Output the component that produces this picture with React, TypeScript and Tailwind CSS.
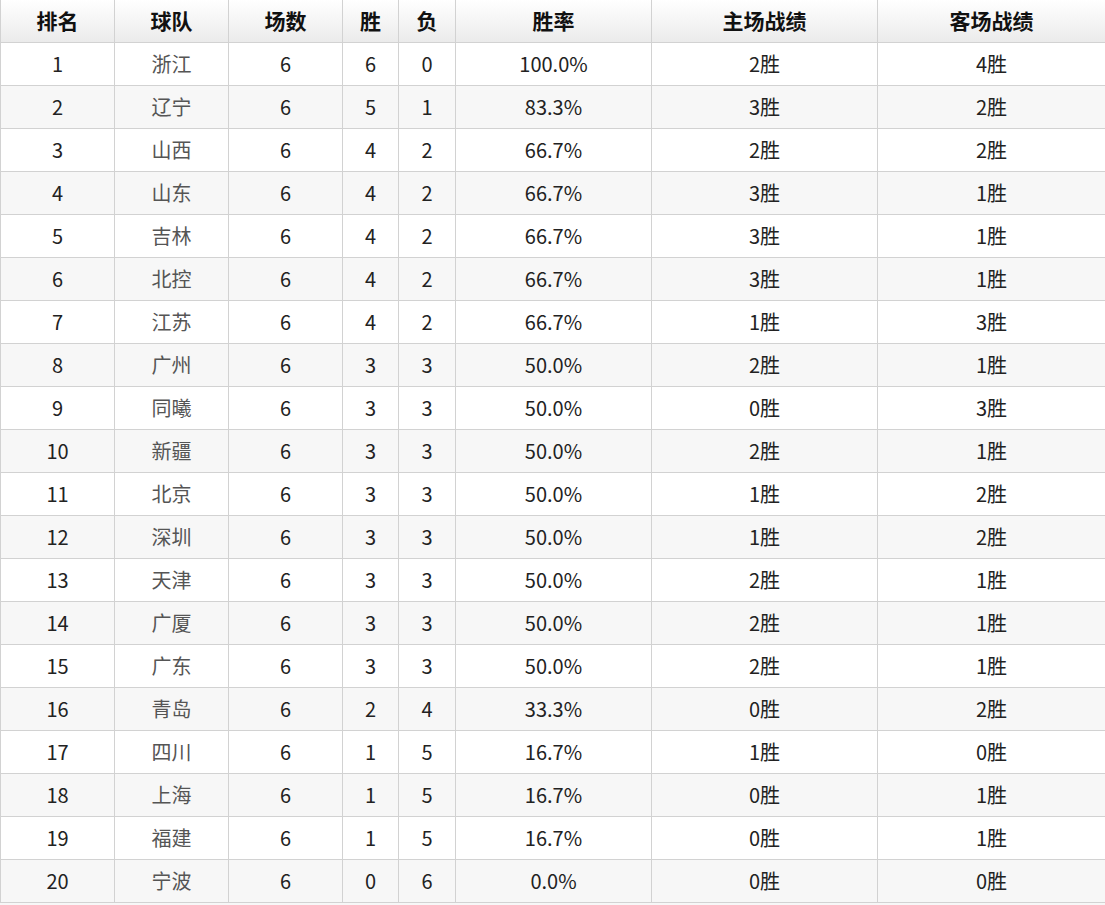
const rows: [number, string, number, number, number, string, string, string][] = [
  [1, '浙江', 6, 6, 0, '100.0%', '2胜', '4胜'],
  [2, '辽宁', 6, 5, 1, '83.3%', '3胜', '2胜'],
  [3, '山西', 6, 4, 2, '66.7%', '2胜', '2胜'],
  [4, '山东', 6, 4, 2, '66.7%', '3胜', '1胜'],
  [5, '吉林', 6, 4, 2, '66.7%', '3胜', '1胜'],
  [6, '北控', 6, 4, 2, '66.7%', '3胜', '1胜'],
  [7, '江苏', 6, 4, 2, '66.7%', '1胜', '3胜'],
  [8, '广州', 6, 3, 3, '50.0%', '2胜', '1胜'],
  [9, '同曦', 6, 3, 3, '50.0%', '0胜', '3胜'],
  [10, '新疆', 6, 3, 3, '50.0%', '2胜', '1胜'],
  [11, '北京', 6, 3, 3, '50.0%', '1胜', '2胜'],
  [12, '深圳', 6, 3, 3, '50.0%', '1胜', '2胜'],
  [13, '天津', 6, 3, 3, '50.0%', '2胜', '1胜'],
  [14, '广厦', 6, 3, 3, '50.0%', '2胜', '1胜'],
  [15, '广东', 6, 3, 3, '50.0%', '2胜', '1胜'],
  [16, '青岛', 6, 2, 4, '33.3%', '0胜', '2胜'],
  [17, '四川', 6, 1, 5, '16.7%', '1胜', '0胜'],
  [18, '上海', 6, 1, 5, '16.7%', '0胜', '1胜'],
  [19, '福建', 6, 1, 5, '16.7%', '0胜', '1胜'],
  [20, '宁波', 6, 0, 6, '0.0%', '0胜', '0胜'],
]

const headers = ['排名', '球队', '场数', '胜', '负', '胜率', '主场战绩', '客场战绩']
const widths = ['w-[114px]', 'w-[114px]', 'w-[114px]', 'w-[56px]', 'w-[57px]', 'w-[196px]', 'w-[226px]', 'w-[228px]']

export default function App() {
  return (
    <div className="w-[1105px] h-[905px] bg-[#f7f7f7] font-['Noto_Sans_CJK_SC','Noto_Sans',sans-serif]">
      <table className="w-[1105px] table-fixed border-collapse text-center text-[20px]">
        <colgroup>
          {widths.map((w, i) => (
            <col key={i} className={w} />
          ))}
        </colgroup>
        <thead>
          <tr className="h-[42px] bg-gradient-to-b from-white to-[#ebebeb]">
            {headers.map((h) => (
              <th key={h} className="border border-[#d2d2d2] border-t-0 font-bold text-[21px] text-[#111] p-0 leading-none">
                {h}
              </th>
            ))}
          </tr>
        </thead>
        <tbody>
          {rows.map((r, i) => (
            <tr key={r[0]} className={i % 2 === 0 ? 'h-[43px] bg-white' : 'h-[43px] bg-[#f7f7f7]'}>
              {r.map((c, j) => (
                <td
                  key={j}
                  className={
                    j === 1
                      ? 'border border-[#d2d2d2] p-0 leading-none text-[#555]'
                      : 'border border-[#d2d2d2] p-0 leading-none text-[#222]'
                  }
                >
                  {c}
                </td>
              ))}
            </tr>
          ))}
        </tbody>
      </table>
    </div>
  )
}
